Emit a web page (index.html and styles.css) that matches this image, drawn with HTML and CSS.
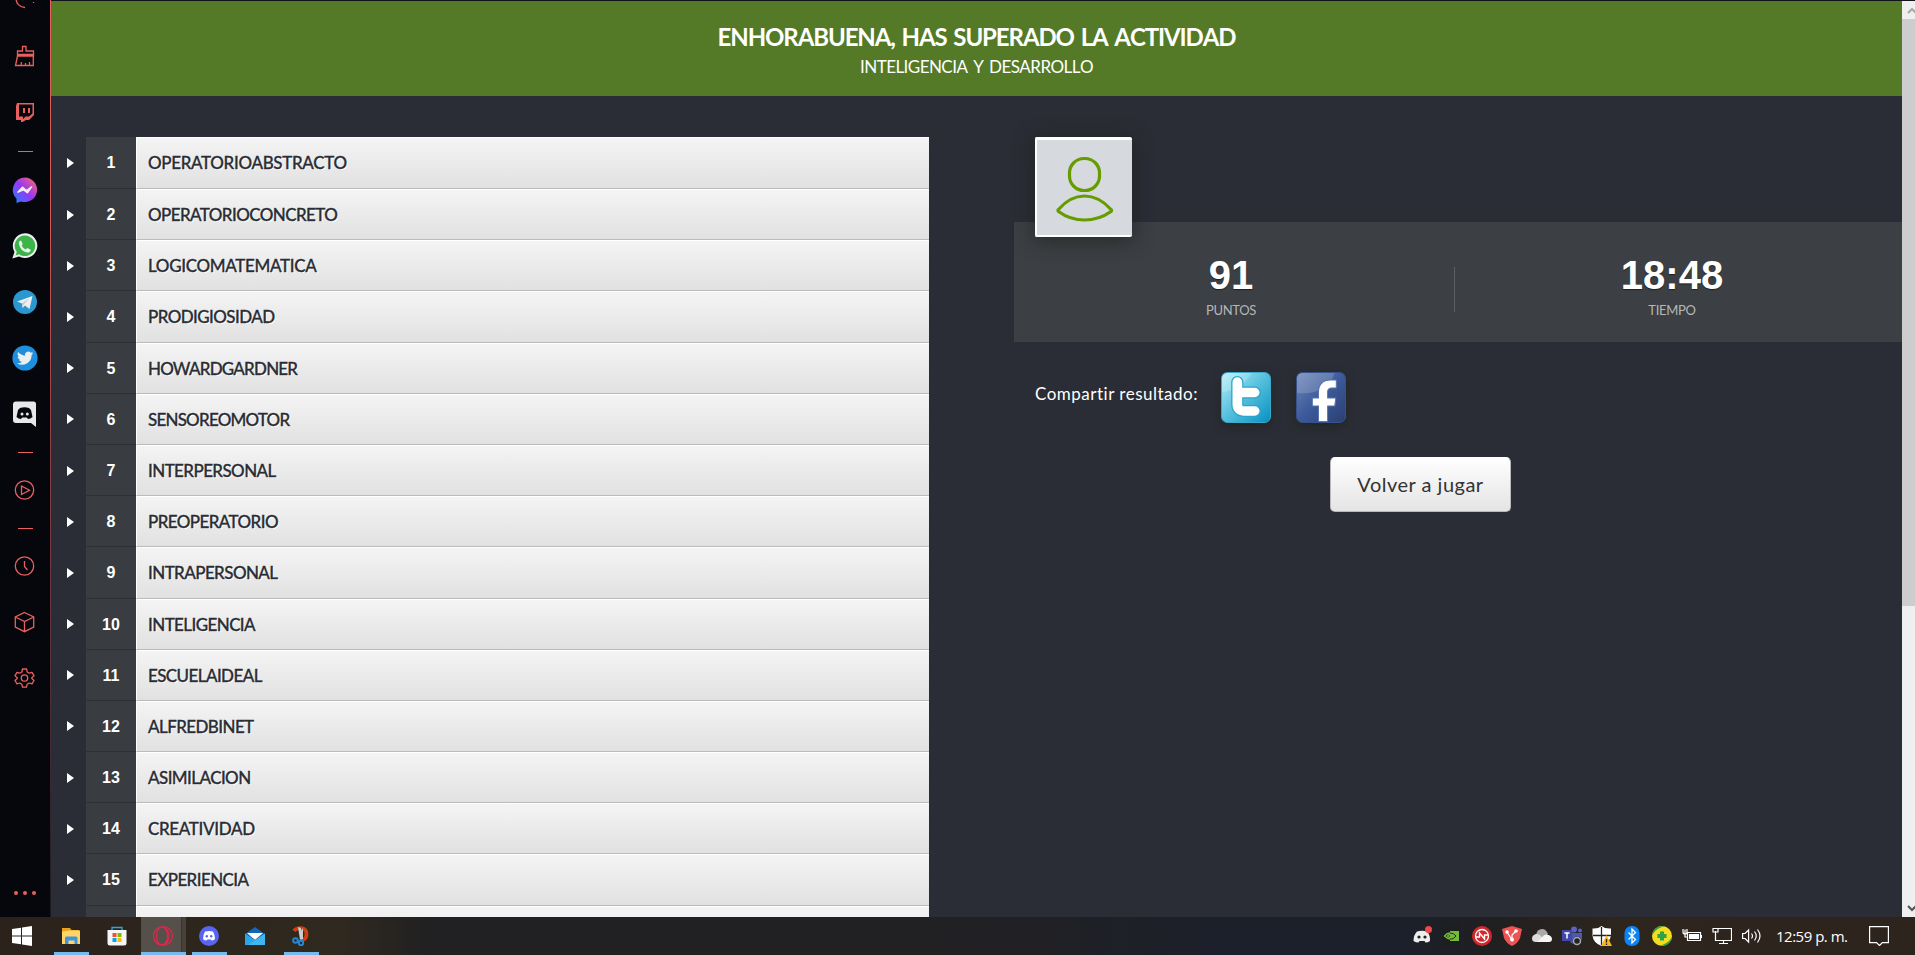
FILE: index.html
```
<!DOCTYPE html>
<html lang="es">
<head>
<meta charset="utf-8">
<title>Inteligencia y desarrollo</title>
<link rel="stylesheet" href="styles.css">
</head>
<body>
<div class="screen">
  <aside class="side">
    <div class="slot first"><svg width="24" height="24" viewBox="0 0 24 24" class="line"><path d="M12 20.500a9 9 0 0 1-9-9V8M11 12h2M20.500 12v1M20.500 15v1"/></svg></div>
    <div class="slot"><svg width="24" height="24" viewBox="0 0 24 24" class="line"><path d="M9.500 7V2.500h3.500V7h7.500v5H4.500V7zM4.500 12L2.500 21.500h17.800V12M8 21l.500-3M12.500 21v-2M16.500 21v-3M4.500 10.500h16"/></svg></div>
    <div class="slot"><svg width="24" height="24" viewBox="0 0 24 24"><path fill="#e9605f" fill-rule="evenodd" d="M4 3h17v12l-5 5h-3l-3.500 2H8v-2H3V6zM6 4.500v12h4V19l2.500-2.500H16l3.500-3v-9zM10 8h2v5h-2zm5 0h2v5h-2z"/></svg></div>
    <div class="rule tall"></div>
    <div class="slot"><svg width="26" height="26" viewBox="0 0 26 26"><defs><linearGradient id="mg" x1="0" y1="1" x2="1" y2="0"><stop offset="0" stop-color="#1489ff"/><stop offset=".5" stop-color="#9a35f5"/><stop offset="1" stop-color="#ff6b65"/></linearGradient></defs><path fill="url(#mg)" d="M13 .500a12.300 12.300 0 1 1-4 24L4.500 26v-4.500A12.300 12.300 0 0 1 13 .500z"/><path d="M5.500 15.500l5-5.500 4 3.500L20 9.500l-4.500 6.500-4-3z" fill="#eee" stroke="#eee" stroke-width="1.200"/></svg></div>
    <div class="slot"><svg width="26" height="26" viewBox="0 0 26 26"><path fill="#eee" d="M13 .300a12.400 12.400 0 1 1-6 23.300L.300 25.500 2.500 19A12.400 12.400 0 0 1 13 .300z"/><path fill="#3bb54a" d="M13 2.500a10.300 10.300 0 1 1-6 18.700L3.500 22.500 4.800 19A10.300 10.300 0 0 1 13 2.500z"/><path fill="#eee" d="M9 7.500l1.700 3.500-1 1.500q1.200 3 4 4l1.600-1.500 3.500 1.700q-.500 3-3.600 2.800Q8.500 18.500 6.800 10.500 7 7.500 9 7.500z"/></svg></div>
    <div class="slot"><svg width="26" height="26" viewBox="0 0 26 26"><circle cx="13" cy="13" r="12" fill="#2b97cf"/><path d="M5 12.500L20.500 7l-3 13-4.500-3.500-2.500 2.500-.500-4.500z" fill="#eee"/><path d="M10 14.500L17.500 9l-6 6.500-1 3.500z" fill="#b9cad5"/></svg></div>
    <div class="slot"><svg width="26" height="26" viewBox="0 0 26 26"><circle cx="13" cy="13" r="12.600" fill="#1d8fde"/><path transform="translate(5 5) scale(.68)" fill="#eee" d="M24 4.600a10 10 0 0 1-2.800.800 5 5 0 0 0 2.100-2.700 10 10 0 0 1-3.100 1.200 4.900 4.900 0 0 0-8.400 4.500A14 14 0 0 1 1.700 3.100a4.900 4.900 0 0 0 1.500 6.600 4.900 4.900 0 0 1-2.200-.600 4.900 4.900 0 0 0 3.900 4.900 5 5 0 0 1-2.200.100 4.900 4.900 0 0 0 4.600 3.400A9.900 9.900 0 0 1 0 19.500a14 14 0 0 0 21.500-12.400A10 10 0 0 0 24 4.600z"/></svg></div>
    <div class="slot"><svg width="26" height="26" viewBox="0 0 26 26"><path fill="#e8e8e8" d="M4 .500h17.500q2.500 0 2.500 2.500v23l-5-4H4q-3 0-3-3V3.500Q1 .500 4 .500z"/><path fill="#07080d" d="M8 7q4.500-1.500 9 0l2 2 1.500 7q-2 2-4.500 2l-1.200-1.500h-4.600L9 18q-2.500 0-4.500-2L6 9z"/><circle cx="10" cy="13" r="1.500" fill="#e8e8e8"/><circle cx="15.300" cy="13" r="1.500" fill="#e8e8e8"/></svg></div>
    <div class="rule"></div>
    <div class="slot"><svg width="24" height="24" viewBox="0 0 24 24" class="line"><circle cx="11.500" cy="12" r="9.200"/><path d="M8.500 8v8.500l8-4.300z"/></svg></div>
    <div class="rule"></div>
    <div class="slot"><svg width="24" height="24" viewBox="0 0 24 24" class="line"><circle cx="11.500" cy="12" r="9.200"/><path d="M11.500 7v5.500l3 3.500"/></svg></div>
    <div class="slot"><svg width="24" height="24" viewBox="0 0 24 24" class="line"><path d="M11.500 2.500l9.200 4.500v10l-9.200 4.700L2.300 17V7zM2.300 7l9.200 4.500L20.700 7M11.500 11.500v10"/></svg></div>
    <div class="slot"><svg width="24" height="24" viewBox="0 0 24 24" class="line"><circle cx="11.500" cy="12" r="3.200"/><path d="M9.500 3h4l.700 3 2 1.200 2.800-.900 2 3.400-2.200 2v.800l2.200 2-2 3.400-2.800-.900-2 1.200-.700 3h-4l-.700-3-2-1.200-2.800.900-2-3.400 2.200-2v-.800l-2.200-2 2-3.400 2.800.900 2-1.200z" stroke-linejoin="round"/></svg></div>
    <div class="more"><i></i><i></i><i></i></div>
  </aside>

  <main class="page">
    <header class="banner">
      <h1>ENHORABUENA, HAS SUPERADO LA ACTIVIDAD</h1>
      <p>INTELIGENCIA Y DESARROLLO</p>
    </header>
    <div class="content">
      <ol class="words">
        <li><span class="arrow"></span><b>1</b><span class="word wide">OPERATORIOABSTRACTO</span></li>
        <li><span class="arrow"></span><b>2</b><span class="word">OPERATORIOCONCRETO</span></li>
        <li><span class="arrow"></span><b>3</b><span class="word wide">LOGICOMATEMATICA</span></li>
        <li><span class="arrow"></span><b>4</b><span class="word">PRODIGIOSIDAD</span></li>
        <li><span class="arrow"></span><b>5</b><span class="word tight">HOWARDGARDNER</span></li>
        <li><span class="arrow"></span><b>6</b><span class="word tight">SENSOREOMOTOR</span></li>
        <li><span class="arrow"></span><b>7</b><span class="word">INTERPERSONAL</span></li>
        <li><span class="arrow"></span><b>8</b><span class="word">PREOPERATORIO</span></li>
        <li><span class="arrow"></span><b>9</b><span class="word">INTRAPERSONAL</span></li>
        <li><span class="arrow"></span><b>10</b><span class="word">INTELIGENCIA</span></li>
        <li><span class="arrow"></span><b>11</b><span class="word">ESCUELAIDEAL</span></li>
        <li><span class="arrow"></span><b>12</b><span class="word">ALFREDBINET</span></li>
        <li><span class="arrow"></span><b>13</b><span class="word">ASIMILACION</span></li>
        <li><span class="arrow"></span><b>14</b><span class="word wide">CREATIVIDAD</span></li>
        <li><span class="arrow"></span><b>15</b><span class="word">EXPERIENCIA</span></li>
        <li class="cut"><b></b><span class="word"></span></li>
      </ol>
      <section class="result">
        <div class="avatar"><svg width="95" height="95" viewBox="0 0 95 95"><g fill="none" stroke="#669c00" stroke-width="3.200"><rect x="32.500" y="18.500" width="30" height="32" rx="14.500"/><path d="M21.500 69.500Q33 56 47.500 56T74 69.500q1 1 0 2Q62 80 47.500 80T21.500 71.500q-1-1 0-2z"/></g></svg></div>
        <div class="scores">
          <div class="score"><strong>91</strong><span>PUNTOS</span></div>
          <div class="score"><strong>18:48</strong><span>TIEMPO</span></div>
        </div>
        <div class="share">
          <span class="label">Compartir resultado:</span>
          <svg class="net" width="50" height="51" viewBox="0 0 49 51" preserveAspectRatio="none"><defs><linearGradient id="tw" x1="0" y1="0" x2="1" y2="1"><stop offset="0" stop-color="#b4f0fb"/><stop offset=".5" stop-color="#54bfdd"/><stop offset="1" stop-color="#0690c2"/></linearGradient></defs><rect x=".500" y=".500" width="48" height="50" rx="6" fill="url(#tw)" stroke="#3aa9ca"/><path d="M1 20Q20 18 30 1H6Q1 1 1 6z" fill="#fff" opacity=".2"/><path d="M16 10v22q0 7 7 7h10M16 20.500h17" fill="none" stroke="#2aa6cb" stroke-width="12" stroke-linecap="round"/><path d="M16 10v22q0 7 7 7h10M16 20.500h17" fill="none" stroke="#fff" stroke-width="9.500" stroke-linecap="round"/></svg>
          <svg class="net" width="50" height="51" viewBox="0 0 49 51" preserveAspectRatio="none"><defs><linearGradient id="fb" x1="0" y1="0" x2="1" y2="1"><stop offset="0" stop-color="#6f86b8"/><stop offset=".5" stop-color="#3c5a9a"/><stop offset="1" stop-color="#2a3f70"/></linearGradient></defs><rect x=".500" y=".500" width="48" height="50" rx="6" fill="url(#fb)" stroke="#36518c"/><path d="M1 21Q30 24 38 1H6Q1 1 1 6z" fill="#fff" opacity=".16"/><path d="M22 49.500V34h-6v-8h6v-5q0-13 12-13h5.500v8H35q-4 0-4 4v6h8l-1 8h-7v15.500z" fill="#fff" stroke="#5674b0"/></svg>
        </div>
        <button class="again">Volver a jugar</button>
      </section>
    </div>
  </main>

  <div class="scroll"><div class="cap"><svg width="13" height="18" viewBox="0 0 13 18"><path d="M6 12l4-4 4 4" fill="none" stroke="#a8a8a8" stroke-width="2.200"/></svg></div><div class="thumb"></div><div class="cap end"><svg width="13" height="18" viewBox="0 0 13 18"><path d="M6 7l4 4 4-4" fill="none" stroke="#555" stroke-width="2.200"/></svg></div></div>
</div>

<footer class="taskbar">
  <div class="apps">
    <div class="app start"><svg width="20" height="20" viewBox="0 0 20 20"><path fill="#fff" d="M0 3l9-1.300V9.500H0zM10 1.500L20 0v9.500H10zM0 10.500h9v7.800L0 17zM10 10.500h10V20l-10-1.500z"/></svg></div>
    <div class="app open"><svg width="20" height="20" viewBox="0 0 20 20"><path fill="#e8a317" d="M1 2h8l1.500 2H18v4H1z"/><path fill="#ffd468" d="M1 5.500l8-1h10V18H1z"/><path fill="#3f96db" d="M4 18v-6q0-1.500 1.500-1.500H15q1.500 0 1.500 1.500v6h-3v-3.500h-6V18z"/></svg></div>
    <div class="app"><svg width="20" height="20" viewBox="0 0 20 20"><path d="M5 5V1.500h10V5" fill="none" stroke="#29a9e0" stroke-width="1.300"/><path fill="#f5f5f5" d="M.500 4h19v13q0 2.500-2.500 2.500H3Q.500 19.500.500 17z"/><path fill="#f25022" d="M5.500 7h4v4h-4z"/><path fill="#7fba00" d="M10.500 7h4v4h-4z"/><path fill="#00a4ef" d="M5.500 12h4v4h-4z"/><path fill="#ffb900" d="M10.500 12h4v4h-4z"/></svg></div>
    <div class="app open active"><svg width="22" height="22" viewBox="0 0 22 22" fill="none" stroke="#e3264d" stroke-width="1.200"><circle cx="11" cy="11" r="9.500"/><ellipse cx="10" cy="11" rx="5.500" ry="9"/><path d="M10 2q7 1 7 9t-7 9"/></svg></div>
    <div class="app open"><svg width="20" height="20" viewBox="0 0 20 20"><circle cx="10" cy="10" r="10" fill="#5865f2"/><path fill="#fff" d="M6 5.500q4-1 8 0 2 3.500 2 7.500-1.500 1.500-3.500 1.500l-.700-1H8.200l-.700 1Q5.500 14.500 4 13q0-4 2-7.500z"/><circle cx="7.800" cy="10.300" r="1.200" fill="#5865f2"/><circle cx="12.200" cy="10.300" r="1.200" fill="#5865f2"/></svg></div>
    <div class="app"><svg width="20" height="20" viewBox="0 0 20 20"><path fill="#1266b5" d="M0 8l10-7 10 7v4H0z"/><path fill="#fff" d="M2 7h16l-8 7z"/><path fill="#2aa4ea" d="M0 7.500l10 6.500 10-6.500V19H0z"/><path fill="#55c8f5" d="M20 7.500L3 19h17z" opacity=".5"/></svg></div>
    <div class="app open"><svg width="20" height="20" viewBox="0 0 20 20"><path d="M3 5Q5 2 10 2.200q5.500.800 5.500 5.800t-4 6" fill="none" stroke="#cf3e0e" stroke-width="3.800"/><path fill="#ccc" d="M7 1l3 1 1 10-2 2zM12 2v11l-2 1V5z"/><g fill="none" stroke="#2189d8" stroke-width="2"><circle cx="4.500" cy="14.500" r="2.300"/><circle cx="10" cy="17" r="2.200"/></g></svg></div>
  </div>
  <div class="tray">
    <span><svg width="20" height="20" viewBox="0 0 20 20"><path fill="#eee" d="M5 5.500q5-1.500 10 0 3.500 4 3 9.500-2 1.500-4.500 1.500L12.500 15h-5l-1 1.500Q4 16.500 1.500 15 1.500 9 5 5.500z"/><circle cx="7" cy="11" r="1.600" fill="#222"/><circle cx="13" cy="11" r="1.600" fill="#222"/><circle cx="16.500" cy="3.500" r="3.500" fill="#f04747"/></svg></span>
    <span><svg width="20" height="20" viewBox="0 0 20 20"><path fill="#1b1f1d" d="M1 0h17v20H1z"/><path fill="#76b93a" d="M8 5h9v10H8z"/><path d="M2.500 10q5-6 11 0-5 6-11 0zm3 0q3-3 5.500 0-3 3-5.500 0z" fill="none" stroke="#76b93a" stroke-width="1.300"/><path d="M8 7q4 0 6 3-3 4-6 3" fill="none" stroke="#22301c"/></svg></span>
    <span><svg width="20" height="20" viewBox="0 0 20 20"><circle cx="10" cy="10" r="10" fill="#d1272d"/><circle cx="10" cy="10" r="6.500" fill="none" stroke="#fff" stroke-width="1.300"/><path d="M4 11h3.500V7l5 6V9H16" fill="none" stroke="#fff" stroke-width="1.400"/></svg></span>
    <span><svg width="20" height="20" viewBox="0 0 20 20"><path fill="#ee5253" d="M0 3l10-3 10 3-2 9q-2 5-8 8-6-3-8-8z"/><path d="M5 6l5 8V9l4-4" fill="none" stroke="#fff" stroke-width="1.200"/><circle cx="5" cy="6" r="1.800" fill="#fff"/><circle cx="14" cy="5" r="1.800" fill="#fff"/><circle cx="10" cy="13.500" r="2" fill="#fff"/></svg></span>
    <span><svg width="20" height="20" viewBox="0 0 20 20"><path fill="#aaa" d="M4 9q1-6 6-6 4 0 6 5l-8 6z"/><path fill="#ddd" d="M4 16q-4 0-4-3.500T4 8q3-.500 6 3l5 5z"/><path fill="#f5f5f5" d="M5 16l5-4.500Q12 8 15 8.500q5 1 5 4.500t-4 3z"/></svg></span>
    <span><svg width="20" height="20" viewBox="0 0 20 20"><circle cx="12" cy="3.500" r="3" fill="#5b63c4"/><circle cx="18" cy="4.500" r="2" fill="#5b63c4"/><path fill="#4f58b8" d="M8 7h12v6q-2 5-7 5-4 0-5-3z"/><path fill="#4049a8" d="M0 4h10v11H0z"/><path d="M2.500 7h5M5 7v5.500" stroke="#fff" stroke-width="1.500"/><circle cx="15" cy="15" r="4.500" fill="#222"/><circle cx="15" cy="15" r="3.500" fill="none" stroke="#aaa" stroke-width="1.500"/></svg></span>
    <span><svg width="20" height="20" viewBox="0 0 20 20"><path fill="#fff" d="M9.500 0Q13 3 19 2.500v7q-1 7-9.500 10.500Q1 16.500.500 9.500v-7Q6 3 9.500 0z"/><path d="M9.500 1v18M1 9.500h18" stroke="#222" stroke-width="1.300"/><path fill="#f8b51c" d="M14.500 9L20 20H9z"/><path d="M14.500 13v3.500M14.500 17.500V19" stroke="#222" stroke-width="1.300"/></svg></span>
    <span><svg width="20" height="20" viewBox="0 0 20 20"><rect x="2.500" width="15" height="20" rx="7" fill="#0a84f5"/><path d="M6.500 6.500l7 7L10 17V3l3.500 3.500-7 7" fill="none" stroke="#fff" stroke-width="1.300"/></svg></span>
    <span><svg width="20" height="20" viewBox="0 0 20 20"><circle cx="10" cy="10" r="10" fill="#f4dc1e"/><path fill="#2ba24b" d="M0 9Q2-1 13 .500 5 1 0 9zM20 11q-2 10-13 8.500Q15 19 20 11zM8 5.500h4V8h2.500v4H12v2.500H8V12H5.500V8H8z"/></svg></span>
    <span><svg width="20" height="20" viewBox="0 0 20 20"><path d="M5.500 6.500h13v8h-13zM19.500 9v3M3 3.500v4M1 3v3q0 2 2 2t2-2V3M3 8v3h2" fill="none" stroke="#fff" stroke-width="1.200"/><path fill="#fff" d="M7 8h10v5H7z"/></svg></span>
    <span><svg width="20" height="20" viewBox="0 0 20 20"><path d="M6 2.500h13.500v12H3.500V8M11.500 14.500v3M7 17.500h9M3.500 8V5M1 2.500h5V6H1z" fill="none" stroke="#fff" stroke-width="1.200"/></svg></span>
    <span><svg width="20" height="20" viewBox="0 0 20 20"><path d="M.600 7.500h2.500l3.500-3.500v12l-3.500-3.500H.600zM9.500 7.500q2 2.500 0 5M12.500 5.500q3.500 4.500 0 9M15.500 3.500q5 6.500 0 13" fill="none" stroke="#fff" stroke-width="1.200"/></svg></span>
    <time>12:59 p. m.</time>
    <svg class="note" width="20" height="20" viewBox="0 0 20 20"><path d="M.600.600h18.800v16h-6L10.500 19.500 7.500 16.600H.600z" fill="none" stroke="#fff" stroke-width="1.200"/></svg>
  </div>
</footer>
</body>
</html>
```

FILE: styles.css
```
* { box-sizing: border-box; }
body { margin: 0; width: 1915px; height: 955px; overflow: hidden; background: #11131a; font-family: Lato, "Open Sans", sans-serif; display: flex; flex-direction: column; }
svg { display: block; flex: none; }
.screen { height: 917px; display: flex; padding-top: 1px; flex: none; overflow: hidden; }

.side { width: 51px; height: 917px; margin-top: -1px; background: #06070c; border-right: 1px solid; border-image: linear-gradient(#e9605f 0, #d25658 25%, #9a4347 45%, #553037 75%, #1b1820 100%) 1; display: flex; flex-direction: column; flex: none; }
.slot { height: 56px; display: flex; align-items: center; justify-content: center; flex: none; }
.first { margin-top: -30px; height: 58px; }
.line { fill: none; stroke: #e9605f; stroke-width: 1.3; }
.rule { height: 20px; display: flex; align-items: center; justify-content: center; flex: none; }
.rule.tall { height: 22px; }
.rule::after { content: ""; width: 15px; height: 1px; background: #e9605f; }
.more { margin-top: auto; padding-bottom: 22px; display: flex; justify-content: center; gap: 5px; }
.more i { width: 4px; height: 4px; border-radius: 2px; background: #e9605f; }

.page { width: 1851px; background: #2a2d35; flex: none; overflow: hidden; }
.banner { height: 95px; background: #547a28; color: #fff; text-align: center; padding-top: 21px; }
.banner h1 { margin: 0; font-size: 24px; line-height: 29px; font-weight: 700; letter-spacing: -1.1px; word-spacing: 2px; font-kerning: none; }
.banner p { margin: 4px 0 0; font-size: 17px; line-height: 24px; letter-spacing: -0.55px; word-spacing: 2px; font-kerning: none; }
.content { display: flex; padding-top: 41px; }

.words { list-style: none; margin: 0; padding: 0; width: 878px; flex: none; }
.words li { display: flex; height: 51.2px; }
.words li:first-child { height: 52px; }
.arrow { width: 35px; display: flex; align-items: center; padding-left: 16px; }
.arrow::after { content: ""; border-left: 7px solid #fff; border-top: 5px solid transparent; border-bottom: 5px solid transparent; }
.words b { width: 50px; background: #393c40; border-bottom: 1px solid #2d3034; color: #fff; font: 700 16px/51px "Liberation Sans", Arial, sans-serif; text-align: center; }
.word { flex: 1; background: linear-gradient(#f4f4f4, #e1e1e1); border-top: 1px solid #fff; border-left: 1px solid #fff; border-bottom: 1px solid #bbb; padding-left: 11px; font-size: 17px; line-height: 49px; font-weight: 500; color: #2a2d35; -webkit-text-stroke: 0.3px #2a2d35; text-shadow: 1px 1px 0 #fff; letter-spacing: -0.6px; }
.word.wide { letter-spacing: -0.35px; }
.word.tight { letter-spacing: -0.8px; }
.words .cut b { margin-left: 35px; }

.result { margin-left: 85px; width: 888px; display: flex; flex-direction: column; }
.avatar { width: 97px; height: 100px; margin-left: 21px; background: #d6d9de; border: 2px solid #fff; border-top-width: 3px; border-right-width: 0; border-radius: 2px; box-shadow: 0 3px 20px rgba(30, 34, 30, .75); position: relative; z-index: 1; flex: none; }
.scores { margin-top: -15px; height: 120px; background: #3c3f43; display: flex; flex: none; }
.score { flex: 1; display: flex; flex-direction: column; align-items: center; padding-top: 29px; color: #fff; }
.score:first-child { flex: none; width: 441px; padding-right: 7px; background: linear-gradient(#5c5f63, #5c5f63) right 45px / 1px 45px no-repeat; }
.score:last-child { padding-right: 13px; }
.score strong { font: 700 40px/48px "Liberation Sans", Arial, sans-serif; text-shadow: 0 1px 1px rgba(0, 0, 0, .5); }
.score span { font-size: 13px; line-height: 20px; margin-top: 1px; color: #b5b6b8; letter-spacing: -0.3px; }
.share { display: flex; padding: 30px 0 0 21px; }
.label { color: #fff; font-size: 17px; line-height: 44px; width: 186px; white-space: nowrap; letter-spacing: 0.5px; }
.net { margin-right: 25px; filter: drop-shadow(0 3px 4px rgba(30, 34, 30, .7)); }
.again { margin: 34px 0 0 316px; width: 181px; height: 55px; border: 1px solid #b9b9b9; border-top-color: #fff; border-radius: 5px; background: linear-gradient(#fff, #e4e4e4); color: #333; font: 20px/50px Lato, "Open Sans", sans-serif; letter-spacing: 0.5px; padding: 0 0 2px; }

.scroll { width: 13px; height: 916px; background: #efefef; display: flex; flex-direction: column; flex: none; overflow: hidden; }
.cap { height: 18px; background: #efefef; }
.thumb { height: 587px; background: #cdcdcd; }
.cap.end { margin-top: auto; }

.taskbar { height: 38px; display: flex; justify-content: space-between; background: linear-gradient(90deg, #2b221b 0, #2f291f 340px, #212022 430px, #212024 1000px, #1d202a 1200px, #1b202b 1400px, #211f20 1500px, #2d261d 1620px, #2d241d 100%); flex: none; }
.apps { display: flex; }
.app { width: 46px; display: flex; align-items: center; justify-content: center; position: relative; }
.app.start { width: 48px; padding-right: 4px; }
.app.open::after { content: ""; position: absolute; bottom: 0; left: 6px; width: 35px; height: 3px; background: #76b9ed; }
.app.active { background: linear-gradient(90deg, transparent 1px, #55504a 1px 41px, #37342c 41px 42px, #46423a 42px); }
.app.active::after { left: 1px; width: 45px; }
.tray { display: flex; align-items: center; color: #fff; }
.tray span { width: 30px; display: flex; justify-content: center; }
.tray time { font: 15px/38px "Open Sans", "Noto Sans", sans-serif; width: 102px; padding-left: 9px; letter-spacing: -0.5px; white-space: nowrap; }
.note { margin-right: 26px; }
```
